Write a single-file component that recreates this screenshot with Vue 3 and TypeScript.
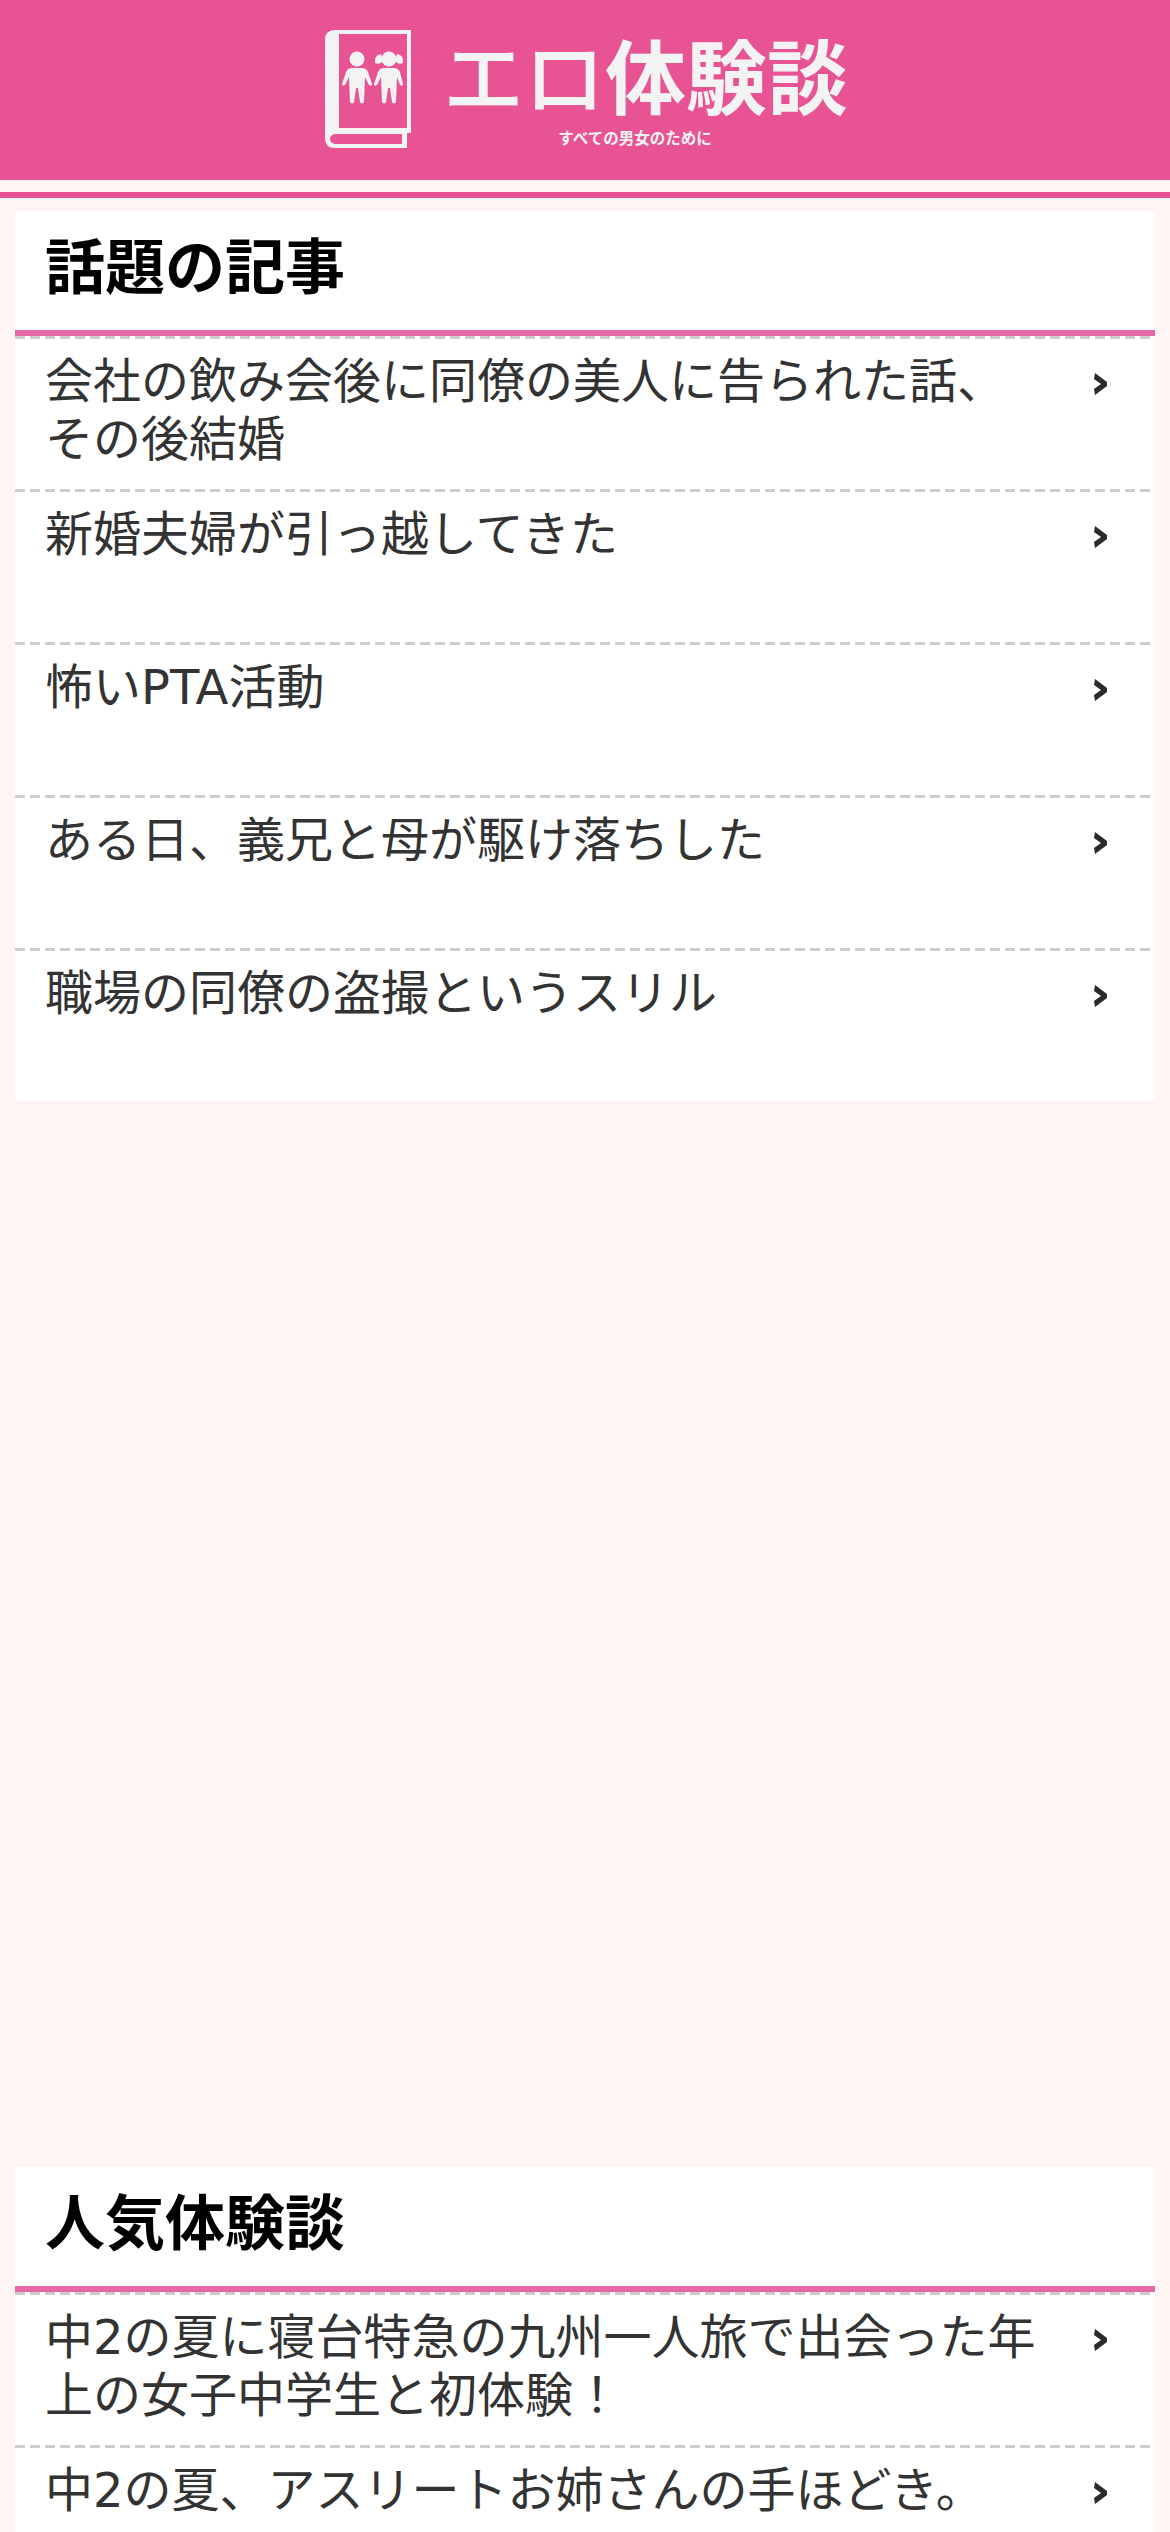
<script setup lang="ts">
const topics: string[] = [
  "会社の飲み会後に同僚の美人に告られた話、その後結婚",
  "新婚夫婦が引っ越してきた",
  "怖いPTA活動",
  "ある日、義兄と母が駆け落ちした",
  "職場の同僚の盗撮というスリル",
];

const popular: string[] = [
  "中2の夏に寝台特急の九州一人旅で出会った年上の女子中学生と初体験！",
  "中2の夏、アスリートお姉さんの手ほどき。",
];
</script>

<template>
  <div class="page">
    <header class="site-header">
      <a class="logo">
        <svg class="logo-icon" viewBox="0 0 86 118" width="86" height="118">
          <path
            fill="#f3f3f3"
            fill-rule="evenodd"
            d="M10 0H86V103H82V118H10Q0 118 0 108V10Q0 0 10 0ZM14 4V98H82V4ZM10 104Q5 105 5 109Q5 113 10 114H77V104Z"
          />
          <circle cx="32" cy="29" r="7.5" fill="#f3f3f3" />
          <path
            fill="#f3f3f3"
            d="M27 38H37Q41 38 43 42L47 54Q47 57 44 55L40 47L39 72Q37 75 35 72L33 58H31L29 72Q27 75 25 72L24 47L20 55Q17 57 17 54L21 42Q23 38 27 38Z"
          />
          <circle cx="64" cy="29" r="7.5" fill="#f3f3f3" />
          <path
            fill="#f3f3f3"
            d="M56 24Q49 25 50 33Q55 35 58 31ZM72 24Q79 25 78 33Q73 35 70 31ZM59 38H69Q73 38 75 42L78 54Q78 57 75 55L72 47L71 72Q69 75 67 72L65 58H63L61 72Q59 75 57 72L56 47L52 55Q49 57 49 54L53 42Q55 38 59 38Z"
          />
        </svg>
        <div class="logo-text">
          <div class="logo-title">エロ<span class="logo-strong">体験談</span></div>
          <div class="logo-sub">すべての男女のために</div>
        </div>
      </a>
    </header>
    <div class="header-rule"></div>

    <section class="card">
      <h2 class="card-title">話題の記事</h2>
      <ul class="list">
        <li v-for="item in topics" :key="item" class="row">
          <span class="row-text">{{ item }}</span>
          <svg class="chevron" viewBox="0 0 13 22" width="13" height="22">
            <path fill="#2b2b2b" d="M1 0L13 9V13L1 22L0 16L7 11L0 6Z" />
          </svg>
        </li>
      </ul>
    </section>

    <div class="ad-slot"></div>

    <section class="card">
      <h2 class="card-title">人気体験談</h2>
      <ul class="list">
        <li v-for="item in popular" :key="item" class="row">
          <span class="row-text">{{ item }}</span>
          <svg class="chevron" viewBox="0 0 13 22" width="13" height="22">
            <path fill="#2b2b2b" d="M1 0L13 9V13L1 22L0 16L7 11L0 6Z" />
          </svg>
        </li>
      </ul>
    </section>
  </div>
</template>

<style scoped>
.page {
  background: #fff5f3;
  min-height: 2532px;
  font-family: "DejaVu Sans", "Noto Sans CJK JP", sans-serif;
  color: #333;
}
.site-header {
  height: 180px;
  background: #e85393;
  display: flex;
  justify-content: center;
}
.logo {
  display: flex;
  align-items: flex-start;
  gap: 32px;
  padding-top: 30px;
  margin-left: 3px;
}
.logo-text {
  width: 405px;
  color: #f3f3f3;
  text-align: center;
}
.logo-title {
  font-size: 81px;
  font-weight: 500;
  line-height: 90px;
  white-space: nowrap;
  margin-top: 5px;
}
.logo-strong {
  font-weight: 700;
}
.logo-sub {
  font-size: 15.5px;
  font-weight: 700;
  line-height: 20px;
  margin-top: 4px;
  padding-right: 21px;
}
.header-rule {
  height: 6px;
  margin-top: 12px;
  background: #e85393;
}
.card {
  margin: 13px 15px 0;
  background: #fff;
}
.card-title {
  margin: 0;
  height: 125px;
  padding: 21px 30px 0;
  box-sizing: border-box;
  border-bottom: 6px solid #e668a4;
  font-size: 60px;
  font-weight: 700;
  line-height: 72px;
  color: #000;
}
.list {
  list-style: none;
  margin: 0;
  padding: 0;
}
.row {
  height: 153px;
  box-sizing: border-box;
  padding: 16px 45px 0 30px;
  display: flex;
  justify-content: space-between;
  align-items: flex-start;
  background: repeating-linear-gradient(90deg, #ccc 0 10px, transparent 10px 15px) top / 100% 3px no-repeat;
}
.row-text {
  width: 1000px;
  font-size: 48px;
  line-height: 58px;
}
.chevron {
  flex: none;
  margin-top: 21px;
  margin-right: 3px;
}
.ad-slot {
  height: 1053px;
}
</style>

<style>
html,
body {
  margin: 0;
  overflow: hidden;
}
</style>
